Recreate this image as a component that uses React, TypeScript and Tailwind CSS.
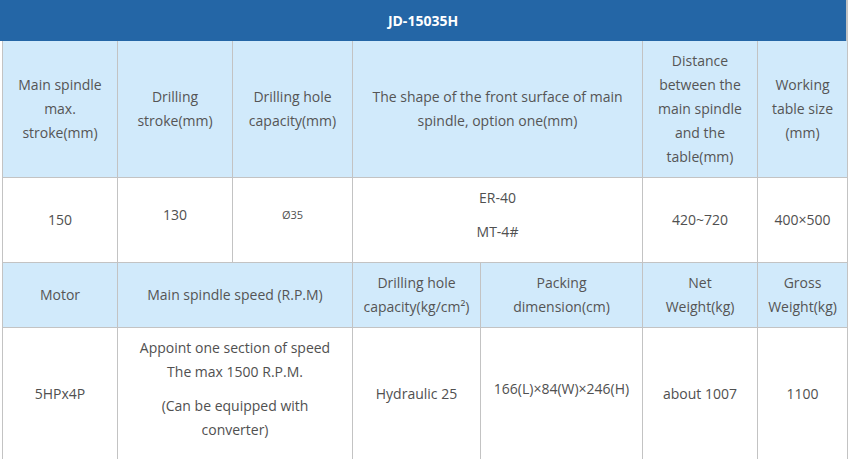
import React from "react";

const lbl = "bg-[#d1eafb] text-[#555555] border-r border-b border-[#c3c3c3] flex flex-col items-center justify-center text-center leading-[24px]";
const dat = "bg-white text-[#505050] border-r border-b border-[#c3c3c3] flex flex-col items-center justify-center text-center leading-[24px]";

export default function App() {
  return (
    <div className="w-[850px] h-[459px] overflow-hidden bg-white text-[14px]" style={{ fontFamily: '"Open Sans", "Noto Sans", sans-serif' }}>
      <div className="w-[848px] h-[41px] bg-[#2466a6] border-r-2 border-[#c3c3c3] flex items-center justify-center text-white font-bold text-[14px]">
        JD-15035H
      </div>
      <div className="ml-[2px] border-l border-[#c3c3c3] grid grid-cols-[115px_115px_120px_128px_162px_115px_90px] grid-rows-[137px_85px_65px_132px]">
        {/* Row 1 labels */}
        <div className={lbl}><span>Main spindle</span><span>max.</span><span>stroke(mm)</span></div>
        <div className={lbl}><span>Drilling</span><span>stroke(mm)</span></div>
        <div className={lbl}><span>Drilling hole</span><span>capacity(mm)</span></div>
        <div className={`${lbl} col-span-2`}><span>The shape of the front surface of main</span><span>spindle, option one(mm)</span></div>
        <div className={lbl}><span>Distance</span><span>between the</span><span>main spindle</span><span>and the</span><span>table(mm)</span></div>
        <div className={lbl}><span>Working</span><span>table size</span><span>(mm)</span></div>

        {/* Row 2 data */}
        <div className={dat}><span>150</span></div>
        <div className={dat}><p className="mb-[10px]">130</p></div>
        <div className={dat}><p className="mb-[10px] text-[11px]">Ø35</p></div>
        <div className={`${dat} col-span-2`}><p className="mb-[10px]">ER-40</p><p className="mb-[10px]">MT-4#</p></div>
        <div className={dat}><span>420~720</span></div>
        <div className={dat}><span>400×500</span></div>

        {/* Row 3 labels */}
        <div className={lbl}><span>Motor</span></div>
        <div className={`${lbl} col-span-2`}><span>Main spindle speed (R.P.M)</span></div>
        <div className={lbl}><span>Drilling hole</span><span>capacity(kg/cm²)</span></div>
        <div className={lbl}><span>Packing</span><span>dimension(cm)</span></div>
        <div className={lbl}><span>Net</span><span>Weight(kg)</span></div>
        <div className={lbl}><span>Gross</span><span>Weight(kg)</span></div>

        {/* Row 4 data */}
        <div className={dat}><span>5HPx4P</span></div>
        <div className={`${dat} col-span-2`}>
          <p className="mb-[10px] flex flex-col"><span>Appoint one section of speed</span><span>The max 1500 R.P.M.</span></p>
          <p className="mb-[10px] flex flex-col"><span>(Can be equipped with</span><span>converter)</span></p>
        </div>
        <div className={dat}><span>Hydraulic 25</span></div>
        <div className={dat}><p className="mb-[10px]">166(L)×84(W)×246(H)</p></div>
        <div className={dat}><span>about 1007</span></div>
        <div className={dat}><span>1100</span></div>
      </div>
    </div>
  );
}
